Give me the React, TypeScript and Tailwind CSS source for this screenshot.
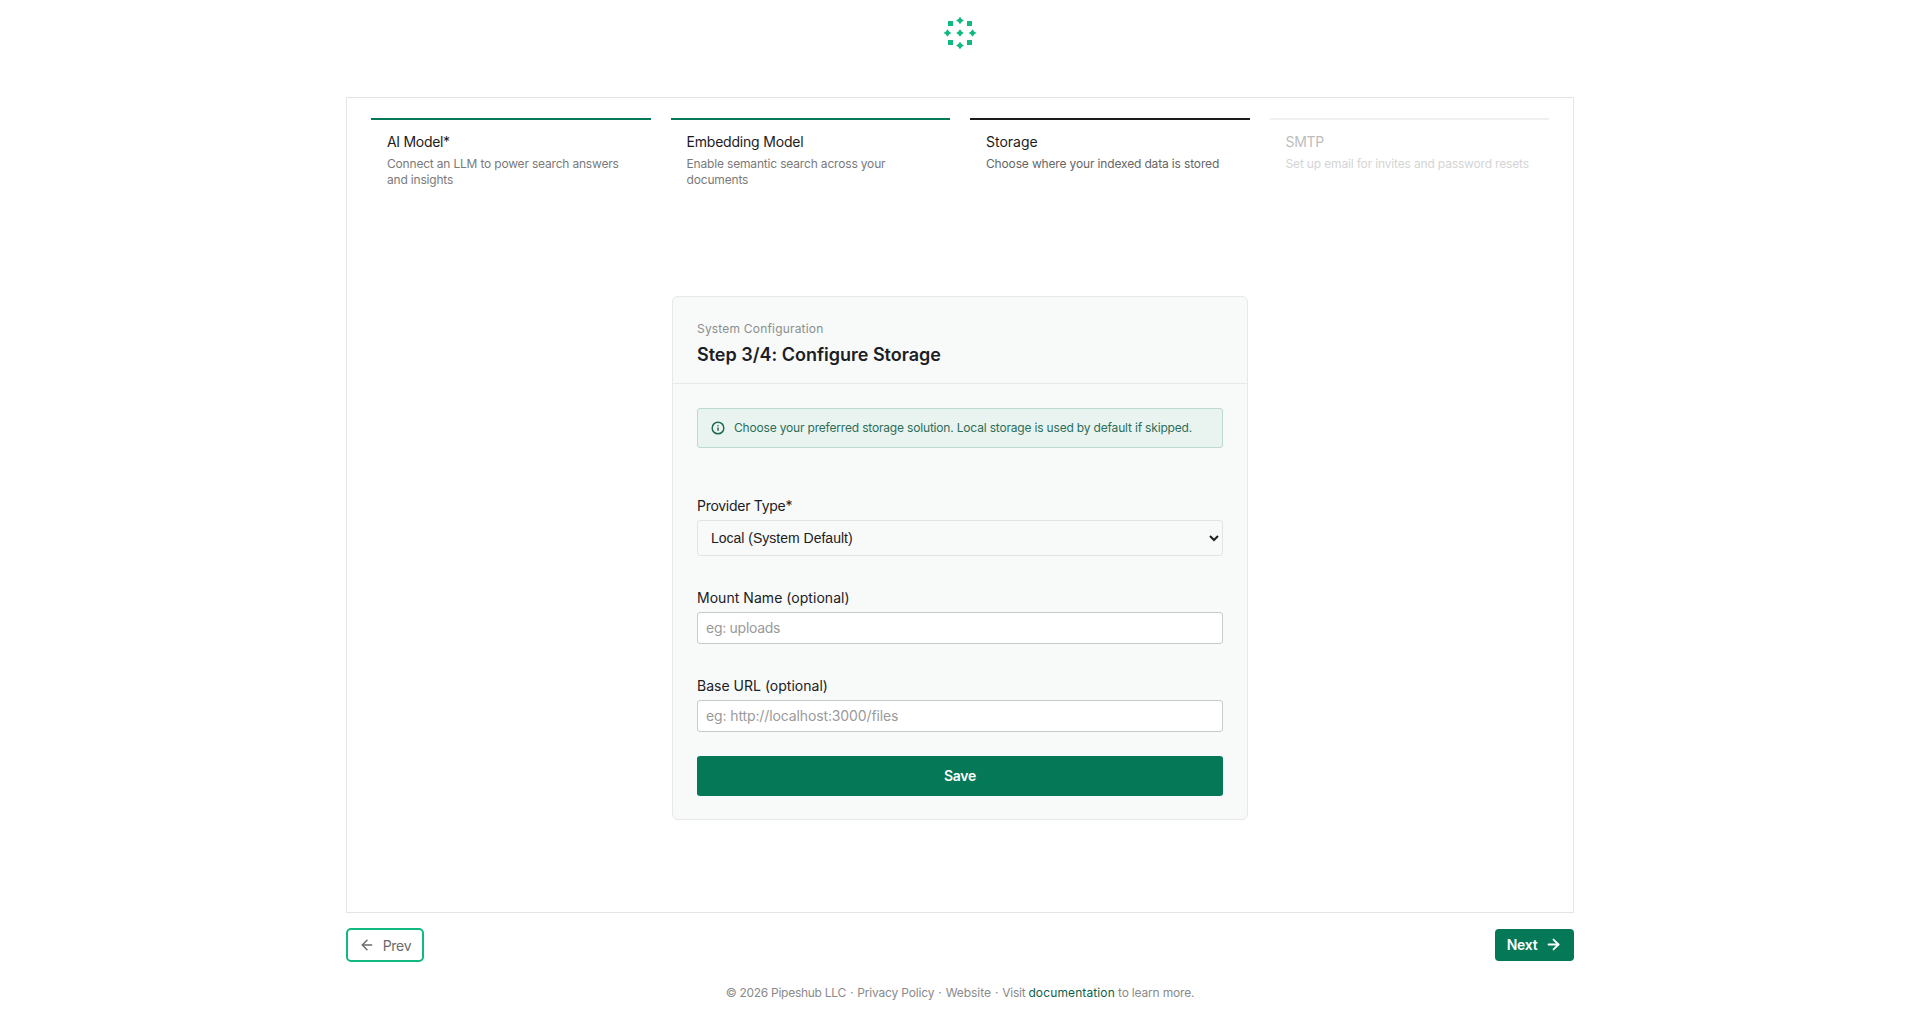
import { ArrowLeft, ArrowRight, Info } from "lucide-react";

const steps = [
  { title: "AI Model*", desc: "Connect an LLM to power search answers and insights", bar: "bg-[#047857]", title2: "text-[#1c1c1c] tracking-[-0.3px]", desc2: "text-[#7a7a7a] tracking-[-0.19px]" },
  { title: "Embedding Model", desc: "Enable semantic search across your documents", bar: "bg-[#047857]", title2: "text-[#1c1c1c] tracking-[-0.2px]", desc2: "text-[#7a7a7a] tracking-[-0.17px]" },
  { title: "Storage", desc: "Choose where your indexed data is stored", bar: "bg-[#1c1c1c]", title2: "text-[#1c1c1c] tracking-[0px]", desc2: "text-[#666666] tracking-[-0.15px]" },
  { title: "SMTP", desc: "Set up email for invites and password resets", bar: "bg-[#f0f0f0]", title2: "text-[#bdbdbd] tracking-[-0.28px]", desc2: "text-[#d4d4d4] tracking-[-0.16px]" },
];

function Logo() {
  const diamonds = [[16, 3.5], [3.5, 16], [16, 16], [28.5, 16], [16, 28.5]];
  const squares = [[6.5, 6.5], [25.5, 6.5], [6.5, 25.5], [25.5, 25.5]];
  return (
    <svg width="32" height="32" viewBox="0 0 32 32" fill="#10b981">
      {diamonds.map(([x, y]) => (
        <path key={`${x}-${y}`} d={`M${x} ${y - 3.8}L${x + 1.6} ${y - 1.6}L${x + 3.8} ${y}L${x + 1.6} ${y + 1.6}L${x} ${y + 3.8}L${x - 1.6} ${y + 1.6}L${x - 3.8} ${y}L${x - 1.6} ${y - 1.6}Z`} />
      ))}
      {squares.map(([x, y]) => (
        <rect key={`${x}-${y}`} x={x - 2.5} y={y - 2.5} width="5" height="5" />
      ))}
    </svg>
  );
}

function Field({ label, placeholder, labelTrack, inputTrack }: { label: string; placeholder: string; labelTrack: string; inputTrack: string }) {
  return (
    <div className="mt-8 flex flex-col gap-1">
      <label className={`text-[14px] leading-5 text-[#1c2024] ${labelTrack}`}>{label}</label>
      <input
        placeholder={placeholder}
        className={`h-8 w-full rounded-[3px] border border-[#c9cbcb] bg-white px-2 pb-px text-[14px] text-[#1c2024] outline-none placeholder:text-[#9a9a9a] ${inputTrack}`}
      />
    </div>
  );
}

export default function App() {
  return (
    <div className="flex min-h-[1024px] flex-col items-center bg-white font-['Inter',sans-serif]">
      <div className="flex h-[97px] w-full justify-center pt-[17px]">
        <Logo />
      </div>

      <main className="ml-px h-[816px] w-[1228px] border border-[#e4e4e4] px-6 pt-5">
        <div className="flex gap-5">
          {steps.map((s) => (
            <div key={s.title} className="flex-1">
              <div className={`h-0.5 ${s.bar}`} />
              <div className="px-4 pt-3">
                <div className={`text-[14px] leading-5 ${s.title2}`}>{s.title}</div>
                <div className={`mt-1 text-[12px] leading-4 ${s.desc2}`}>{s.desc}</div>
              </div>
            </div>
          ))}
        </div>

        <section className="mx-auto mt-[108px] w-[576px] rounded-md border border-[#e6e9e8] bg-[#f8faf9]">
          <header className="border-b border-[#e6e9e8] px-6 pb-[14px] pt-6">
            <div className="text-[12px] leading-4 tracking-[0.19px] text-[#8a8f8d]">System Configuration</div>
            <h1 className="mt-1 text-[18px] font-semibold leading-7 tracking-[-0.01px] text-[#1c2024]">Step 3/4: Configure Storage</h1>
          </header>

          <div className="px-6 pb-[23px] pt-6">
            <div className="flex h-10 items-center gap-[9px] rounded-[3px] border border-[#bcdacf] bg-[#e9f3f0] px-[13px]">
              <Info size={14} strokeWidth={2.5} className="text-[#1f6a52]" />
              <span className="text-[12px] tracking-[-0.18px] text-[#2c6e59]">Choose your preferred storage solution. Local storage is used by default if skipped.</span>
            </div>

            <div className="mt-12 flex flex-col gap-1">
              <label className="text-[14px] leading-5 tracking-[-0.28px] text-[#1c2024]">Provider Type*</label>
              <select className="h-9 w-full rounded-[3px] border border-[#e2e5e4] bg-transparent pl-[9px] pr-[11px] font-['Liberation_Sans',sans-serif] text-[14px] text-[#1c2024] outline-none">
                <option>Local (System Default)</option>
              </select>
            </div>

            <Field label="Mount Name (optional)" placeholder="eg: uploads" labelTrack="tracking-[0.04px]" inputTrack="tracking-[-0.28px]" />
            <Field label="Base URL (optional)" placeholder="eg: http://localhost:3000/files" labelTrack="tracking-[0.01px]" inputTrack="tracking-[-0.12px]" />

            <button className="mt-6 h-10 w-full rounded-[3px] bg-[#047857] pb-0.5 text-[14px] font-semibold tracking-[-0.28px] text-white">Save</button>
          </div>
        </section>
      </main>

      <div className="ml-px mt-[15px] flex w-[1228px] items-center justify-between">
        <button className="flex h-[34px] w-[78px] items-center justify-center gap-2 rounded-[5px] border-2 border-[#10b981] text-[14px] tracking-[-0.28px] text-[#6b6b6b]">
          <ArrowLeft size={16} strokeWidth={2.2} />
          Prev
        </button>
        <button className="flex h-8 w-[79px] items-center justify-center gap-2 rounded-[4px] bg-[#047857] pb-0.5 text-[14px] font-semibold tracking-[-0.28px] text-white">
          Next
          <ArrowRight size={17} strokeWidth={2.6} />
        </button>
      </div>

      <footer className="ml-px mt-[23px] text-[12px] leading-4 tracking-[-0.28px] text-[#8a8a8a]">
        © 2026 Pipeshub LLC <span className="mx-[1px]">·</span> <span className="tracking-[-0.18px]">Privacy Policy</span> <span className="mx-[1px]">·</span> <span className="tracking-[-0.04px]">Website</span> <span className="mx-[1px]">·</span> Visit <span className="tracking-[0.12px] text-[#0b5f47]">documentation</span> <span className="tracking-[-0.18px]">to learn more.</span>
      </footer>
    </div>
  );
}
